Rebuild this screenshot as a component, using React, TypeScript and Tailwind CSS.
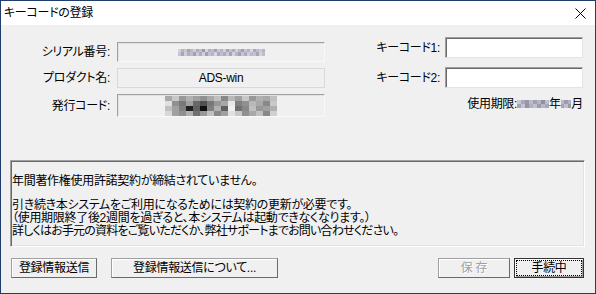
import type { JSX } from "react";

// mosaic blocks standing in for the blurred values in the screenshot
const serialBlocks: string[][] = [
  ["#d4d0dc", "#b8b4c4", "#c8c4d4", "#a8a4b4", "#bcb8c8", "#d0ccd8", "#b0acbc", "#c4c0d0", "#9c98a8", "#d8d4e0", "#b4b0c0", "#c0bccc", "#a4a0b0", "#ccc8d8", "#b8b4c4", "#d4d0dc", "#a8a4b4", "#c4c0d0", "#b0acbc", "#d0ccd8", "#bcb8c8", "#a4a0b0", "#c8c4d4", "#b4b0c0", "#d8d4e0", "#aca8b8", "#c0bccc", "#ccc8d4", "#b8b4c4"],
  ["#c8c4d4", "#a8a4b4", "#d0ccd8", "#b4b0c0", "#c0bccc", "#a0a0b0", "#ccc8d8", "#b0acbc", "#d4d0dc", "#a4a0b0", "#c4c0d0", "#b8b4c4", "#d8d4e0", "#aca8b8", "#c0bccc", "#b0acbc", "#ccc8d8", "#a8a4b4", "#d4d0dc", "#b8b4c4", "#a4a0b0", "#c8c4d4", "#b0acbc", "#d0ccd8", "#bcb8c8", "#c4c0d0", "#a8a4b4", "#d4d0dc", "#c0bccc"],
];

const codeBlocks: string[][] = [
  ["#a8a8a8", "#c8c8c8", "#989898", "#b0b0b0", "#a0a0a0", "#909090", "#a8a8a8", "#c0c0c0", "#888888", "#b8b8b8", "#a0a0a0", "#c8c8c8", "#989898", "#b0b0b0", "#a8a8a8", "#c0c0c0"],
  ["#e0e0e0", "#909090", "#787878", "#a0a0a0", "#686868", "#505050", "#787878", "#989898", "#a8a8a8", "#e8e8e8", "#808080", "#909090", "#b8b8b8", "#a8a8a8", "#888888", "#c8c8c8"],
  ["#c0c0c0", "#a0a0a0", "#808080", "#202020", "#606060", "#101010", "#808080", "#b0b0b0", "#606060", "#f0f0f0", "#707070", "#888888", "#c0c0c0", "#989898", "#a0a0a0", "#b0b0b0"],
  ["#d8d8d8", "#a0a0a0", "#909090", "#b0b0b0", "#707070", "#989898", "#c0c0c0", "#888888", "#a0a0a0", "#e0e0e0", "#c8c8c8", "#909090", "#a8a8a8", "#c0c0c0", "#888888", "#d0d0d0"],
];

const yearBlocks: string[][] = [
  ["#c8c8d4", "#a8a8b8", "#9898a8", "#bcbcc8", "#a0a0b0", "#b4b4c4", "#9090a0", "#c0c0cc"],
  ["#a4a4b4", "#c4c4d0", "#9494a4", "#b0b0c0", "#c0c0cc", "#9c9cac", "#b8b8c4", "#a8a8b8"],
];

const monthBlocks: string[][] = [
  ["#b8b8c8", "#9c9cac", "#b0b0c0"],
  ["#a4a4b4", "#c0c0cc", "#9898a8"],
];

function Mosaic({ rows, w, h }: { rows: string[][]; w: number; h: number }): JSX.Element {
  return (
    <span className="inline-flex flex-col">
      {rows.map((row, i) => (
        <span key={i} className="flex">
          {row.map((c, j) => (
            <span key={j} style={{ backgroundColor: c, width: w, height: h }} />
          ))}
        </span>
      ))}
    </span>
  );
}

function Field({ label, children, flat }: { label: string; children: React.ReactNode; flat?: boolean }): JSX.Element {
  return (
    <div className="flex items-center">
      <span className="w-[100px] text-right">{label}</span>
      <div
        className={`ml-[7px] w-[208px] flex items-center justify-center ${
          flat
            ? "h-[20px] border border-[#d9d9d9]"
            : "border border-[#a0a0a0] border-b-[#f8f8f8] border-r-[#f8f8f8] shadow-[inset_1px_1px_0_#e3e3e3]"
        }`}
      >
        {children}
      </div>
    </div>
  );
}

function KeyInput({ label }: { label: string }): JSX.Element {
  return (
    <div className="flex items-center">
      <span>{label}</span>
      <div className="ml-[5px] w-[138px] h-[21px] bg-white border border-[#a0a0a0] border-b-[#e3e3e3] border-r-[#e3e3e3] shadow-[inset_1px_1px_0_#696969]" />
    </div>
  );
}

const button =
  "h-[20px] flex items-center justify-center bg-[#f0f0f0] border border-[#a0a0a0] border-b-[#696969] border-r-[#696969] shadow-[inset_1px_1px_0_#ffffff]";

export default function App(): JSX.Element {
  return (
    <div className="w-[596px] h-[294px] flex flex-col border border-[#1f3e6e] bg-[#f0f0f0] text-[12px] leading-[16px] tracking-[-0.3px] text-black font-['Liberation_Sans','Noto_Sans_CJK_JP',sans-serif] [font-feature-settings:'palt']">
      <div className="h-[24px] shrink-0 flex items-center justify-between bg-white pl-[3px] pr-[9px]">
        <span>キーコードの登録</span>
        <svg className="w-[11px] h-[11px]" viewBox="0 0 11 11" fill="none" stroke="#000" strokeWidth="1">
          <path d="M0.5 0.5 L10.5 10.5 M10.5 0.5 L0.5 10.5" />
        </svg>
      </div>

      <div className="flex-1 flex flex-col pl-[9px] pr-[10px]">
        <div className="flex justify-between items-start">
          <div className="flex flex-col gap-[6px] pt-[17px]">
            <Field label="シリアル番号:">
              <div className="h-[18px] flex items-center">
                <Mosaic rows={serialBlocks} w={3} h={3.5} />
              </div>
            </Field>
            <Field label="プロダクト名:" flat>
              <span>ADS-win</span>
            </Field>
            <Field label="発行コード:">
              <div className="h-[21px] flex items-center">
                <Mosaic rows={codeBlocks} w={7} h={5} />
              </div>
            </Field>
          </div>

          <div className="flex flex-col items-end gap-[9px] pt-[12px] pr-[2px]">
            <KeyInput label="キーコード1:" />
            <KeyInput label="キーコード2:" />
            <div className="flex items-center mt-[-1px]">
              <span>使用期限:</span>
              <Mosaic rows={yearBlocks} w={4} h={4} />
              <span>年</span>
              <Mosaic rows={monthBlocks} w={3.5} h={4} />
              <span>月</span>
            </div>
          </div>
        </div>

        <div className="mt-[43px] h-[87px] border border-[#a0a0a0] border-b-white border-r-white shadow-[inset_1px_1px_0_#696969,inset_-1px_-1px_0_#e3e3e3] pt-[14px] pl-[1px] leading-[13px]">
          <p>年間著作権使用許諾契約が締結されていません。</p>
          <div className="mt-[11px]">
            <p>引き続き本システムをご利用になるためには契約の更新が必要です。</p>
            <p>（使用期限終了後2週間を過ぎると、本システムは起動できなくなります。）</p>
            <p className="tracking-[-0.8px]">詳しくはお手元の資料をご覧いただくか、弊社サポートまでお問い合わせください。</p>
          </div>
        </div>

        <div className="mt-[11px] flex items-center">
          <button className={`${button} ml-[1px] w-[86px]`}>登録情報送信</button>
          <button className={`${button} ml-[14px] w-[167px]`}>登録情報送信について...</button>
          <div className="flex-1" />
          <button className={`${button} w-[72px] text-[#a0a0a0] [text-shadow:1px_1px_0_#ffffff]`}>保 存</button>
          <button className="ml-[4px] mr-[1px] w-[70px] h-[20px] p-[1px] border border-[#333333] bg-[#f0f0f0] shadow-[inset_1px_1px_0_#ffffff,inset_-1px_-1px_0_#a0a0a0]">
            <span className="flex h-full items-center justify-center border border-dotted border-black">手続中</span>
          </button>
        </div>
      </div>
    </div>
  );
}
